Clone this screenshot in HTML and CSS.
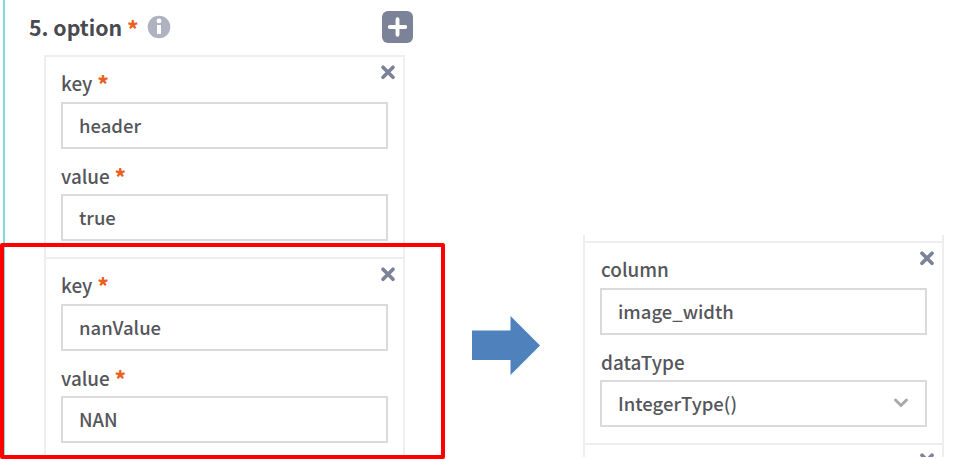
FILE: index.html
```html
<!DOCTYPE html>
<html lang="en">
<head>
<meta charset="utf-8">
<title>Option</title>
<link rel="stylesheet" href="styles.css">
</head>
<body>
<svg class="defs" width="0" height="0">
  <symbol id="close" viewBox="0 0 16 16"><path d="M3 3.3L13 13.3M13 3.3L3 13.3" fill="none" stroke="#7c8297" stroke-width="3.7" stroke-linecap="round"/></symbol>
</svg>
<main class="page">
  <section class="panel">
    <header class="heading">
      <h1 class="title">5. option</h1>
      <span class="star">*</span>
      <svg class="info" viewBox="0 0 24 24"><circle cx="12" cy="12" r="11.3" fill="#afb3c1"/><circle cx="12" cy="5.9" r="2.4" fill="#fff"/><path d="M10 10h4v9h-4z" fill="#fff"/></svg>
      <button class="add"><svg viewBox="0 0 32 32"><path d="M16 8.5v16M8 16.5h16" stroke="#fff" stroke-width="4" stroke-linecap="round"/></svg></button>
    </header>
    <div class="cards">
      <article class="card">
        <svg class="close"><use href="#close"/></svg>
        <div class="label"><span>key</span><span class="star">*</span></div>
        <div class="input"><span>header</span></div>
        <div class="label"><span>value</span><span class="star">*</span></div>
        <div class="input"><span>true</span></div>
      </article>
      <article class="card">
        <svg class="close"><use href="#close"/></svg>
        <div class="label"><span>key</span><span class="star">*</span></div>
        <div class="input"><span>nanValue</span></div>
        <div class="label"><span>value</span><span class="star">*</span></div>
        <div class="input"><span>NAN</span></div>
      </article>
    </div>
  </section>
  <svg class="arrow" viewBox="0 0 68 60"><path d="M0 15.5H38.5V1L68 30.5L38.5 60V45H0Z" fill="#4f81bd"/></svg>
  <section class="result">
    <article class="card">
      <svg class="close"><use href="#close"/></svg>
      <div class="label"><span>column</span></div>
      <div class="input"><span>image_width</span></div>
      <div class="label"><span>dataType</span></div>
      <div class="input select"><span>IntegerType()</span><svg class="chevron" viewBox="0 0 16 12"><path d="M2.5 3L8 8.5L13.5 3" fill="none" stroke="#aaa" stroke-width="3" stroke-linecap="round"/></svg></div>
    </article>
    <article class="card">
      <svg class="close"><use href="#close"/></svg>
    </article>
  </section>
</main>
<div class="highlight"></div>
</body>
</html>
```
FILE: styles.css
```css
* { box-sizing: border-box; }
body {
  margin: 0;
  background: #fff;
  color: #54565b;
  font: 500 18.9px/30px "Noto Sans CJK KR", "Noto Sans", sans-serif;
}
.defs { position: absolute; }
.page {
  display: flex;
  height: 459px;
  overflow: hidden;
}
.panel {
  width: 445px;
  margin-left: 3px;
  border-left: 2px solid #7edbe2;
}
.heading {
  display: flex;
  align-items: center;
  height: 55px;
  width: 408px;
  padding-left: 24px;
}
.title {
  margin: 0 0 1px;
  font-size: 21.3px;
  font-weight: 700;
  line-height: 30px;
  color: #484a4f;
}
.star {
  margin: 0 0 1px 5px;
  color: #e9601f;
  font-size: 21px;
  font-weight: 900;
}
.heading .star { margin-bottom: 0; }
.info {
  width: 24px;
  height: 24px;
  margin: 0 0 1px 9px;
}
.add {
  width: 31px;
  height: 32px;
  margin: 0 0 2px auto;
  padding: 0;
  border: 0;
  border-radius: 6px;
  background: #7c8297;
}
.add svg { display: block; }
.cards { width: 361px; margin-left: 39px; }
.card {
  position: relative;
  height: 202px;
  padding: 12px 15px 0;
  border: 2px solid #eee;
  border-bottom: 0;
}
.close {
  position: absolute;
  top: 7px;
  right: 7px;
  width: 16px;
  height: 16px;
}
.label {
  display: flex;
  align-items: center;
  height: 33px;
  padding-bottom: 5px;
  line-height: 30px;
}
.input + .label { height: 45px; padding: 9px 0 0; }
.input {
  display: flex;
  align-items: center;
  width: 327px;
  height: 47px;
  padding: 0 16px 2px;
  border: 2px solid #dadada;
  font-size: 18.5px;
}
.arrow {
  width: 68px;
  height: 60px;
  margin: 315px 0 0 24px;
}
.result {
  width: 361px;
  height: 222px;
  margin: 235px 0 0 43px;
  padding-top: 6px;
  overflow: hidden;
  border: 2px solid #eee;
  border-width: 0 2px;
}
.result .card { border-width: 2px 0 0; }
.result .label { padding-left: 1px; }
.select { justify-content: space-between; }
.chevron { width: 16px; height: 12px; }
.highlight {
  position: absolute;
  left: 0;
  top: 243px;
  width: 445px;
  height: 216px;
  border: 4px solid #f00;
  border-radius: 2px;
}
```
